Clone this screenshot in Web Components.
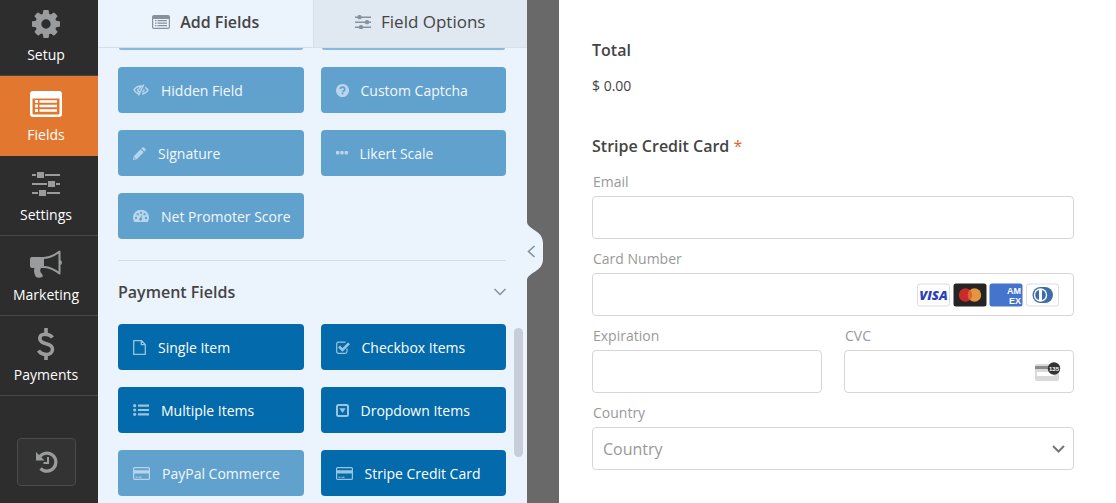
<!DOCTYPE html>
<html lang="en">

<head>
    <meta charset="utf-8">
    <meta name="viewport" content="width=device-width">
    <title>Form Builder</title>
    <style>
        body {
            margin: 0;
            color: #444;
            font-family: "Open Sans", "Noto Sans", sans-serif;
            font-size: 14px;
            background: #fff;
        }
    </style>
</head>

<body>
    <!-- Templates -->
    <template id="tmp-app">
        <style>
            :host {
                display: flex;
                height: 100vh;
                overflow: hidden;
            }
        </style>
        <slot></slot>
    </template>

    <template id="tmp-sidebar">
        <style>
            :host {
                display: flex;
                flex-direction: column;
                flex: none;
                width: 98px;
                background: #2d2d2d;
            }

            nav {
                margin-top: -4px;
            }

            .history {
                display: flex;
                align-items: center;
                justify-content: center;
                height: 48px;
                margin: 42px 22px 0 17px;
                padding: 0;
                color: #9a9b9c;
                background: #333;
                border: 1px solid #4b4b4b;
                border-radius: 4px;
            }
        </style>
        <nav><slot></slot></nav>
        <button class="history" aria-label="Revisions"><fb-icon name="history"></fb-icon></button>
    </template>

    <template id="tmp-nav">
        <style>
            :host {
                display: block;
            }

            a {
                display: flex;
                flex-direction: column;
                align-items: center;
                box-sizing: border-box;
                height: 80px;
                padding: 12px 6px 0 0;
                color: #fff;
                border-bottom: 1px solid #474747;
                text-decoration: none;
                line-height: 24px;
            }

            fb-icon {
                height: 31px;
                margin-bottom: 4px;
                color: #9a9b9c;
            }

            :host([active]) a {
                background: #e27730;
                border-color: #e27730;
            }

            :host([active]) fb-icon {
                color: #fff;
            }
        </style>
        <a href="#"><fb-icon></fb-icon><slot></slot></a>
    </template>

    <template id="tmp-panel">
        <style>
            :host {
                display: flex;
                flex-direction: column;
                flex: none;
                position: relative;
                width: 429px;
                background: #ebf3fc;
            }

            .tabs {
                display: flex;
                flex: none;
            }

            .body {
                flex: 1;
                min-height: 0;
                overflow: hidden;
                padding: 0 21px 0 20px;
            }

            .thumb {
                position: absolute;
                right: 4px;
                top: 328px;
                width: 9px;
                height: 129px;
                border-radius: 5px;
                background: #c8ced9;
            }

            .toggle {
                position: absolute;
                left: 100%;
                top: 222px;
                width: 16px;
                height: 58px;
                padding: 0;
                border: 0;
                background: none;
            }

            .toggle svg {
                display: block;
            }
        </style>
        <div class="tabs"><slot name="tab"></slot></div>
        <div class="body"><slot></slot></div>
        <div class="thumb"></div>
        <button class="toggle" aria-label="Collapse">
            <svg width="16" height="58" viewBox="0 0 16 58">
                <path fill="#ebf3fc" d="M0 0C1 8 16 8 16 21V37C16 50 1 50 0 58Z" />
                <path fill="none" stroke="#86919e" stroke-width="1.6" d="M7.500 24L1.500 29.500L7.500 35" />
            </svg>
        </button>
    </template>

    <template id="tmp-tab">
        <style>
            :host {
                flex: 1;
            }

            button {
                display: flex;
                align-items: center;
                justify-content: center;
                gap: 10px;
                box-sizing: border-box;
                width: 100%;
                height: 48px;
                padding: 0 0 4px;
                color: #444;
                background: #e0e8f1;
                border: solid #d6dfea;
                border-width: 0 0 1px 1px;
                font: inherit;
                font-size: 17px;
            }

            fb-icon {
                color: #86919e;
            }

            :host([active]) button {
                background: #ebf3fc;
                border-left-color: transparent;
                font-size: 16px;
                font-weight: 600;
            }
        </style>
        <button><fb-icon></fb-icon><slot></slot></button>
    </template>

    <template id="tmp-group">
        <style>
            :host {
                display: block;
            }

            :host([label]) {
                margin-top: 21px;
                border-top: 1px solid #d2dbe6;
            }

            header {
                display: none;
                align-items: center;
                justify-content: space-between;
                box-sizing: border-box;
                height: 63px;
                padding-bottom: 2px;
                color: #86919e;
            }

            :host([label]) header {
                display: flex;
            }

            h2 {
                margin: 0;
                color: #444;
                font-size: 16px;
                font-weight: 600;
            }

            .grid {
                display: grid;
                grid-template-columns: 1fr 1fr;
                gap: 17px;
            }

            .peek {
                height: 2px;
                margin: 0 1px;
                background: #87b9de;
                border-radius: 0 0 2px 2px;
            }

            :host([label]) .peek {
                display: none;
            }
        </style>
        <header><h2 id="label"></h2><fb-icon name="down"></fb-icon></header>
        <div class="grid">
            <div class="peek"></div>
            <div class="peek"></div>
            <slot></slot>
        </div>
    </template>

    <template id="tmp-button">
        <style>
            :host {
                display: block;
            }

            button {
                display: flex;
                align-items: center;
                gap: 12px;
                width: 100%;
                height: 46px;
                padding: 0 0 0 15px;
                color: #fff;
                background: #036aab;
                border: 0;
                border-radius: 4px;
                font: inherit;
                white-space: nowrap;
            }

            fb-icon {
                opacity: .6;
            }

            :host([off]) button {
                color: #f3f8fd;
                background: #61a1ce;
            }
        </style>
        <button><fb-icon></fb-icon><slot></slot></button>
    </template>

    <template id="tmp-preview">
        <style>
            :host {
                flex: 1;
                min-width: 0;
                padding: 38px 42px 0 33px;
                background: #fff;
                border-left: 32px solid #696969;
            }

            h3 {
                margin: 0;
                font-size: 16px;
                font-weight: 600;
                line-height: 24px;
            }

            p {
                margin: 12px 0 36px;
                font-size: 14px;
                line-height: 24px;
            }

            span {
                color: #e0652c;
                font-weight: 400;
            }

            .fields {
                display: grid;
                grid-template-columns: repeat(2, minmax(0, 1fr));
                gap: 12px 22px;
                margin-top: 16px;
            }
        </style>
        <h3>Total</h3>
        <p>$ 0.00</p>
        <h3>Stripe Credit Card <span>*</span></h3>
        <div class="fields"><slot></slot></div>
    </template>

    <template id="tmp-field">
        <style>
            :host {
                display: block;
            }

            :host([wide]) {
                grid-column: 1 / -1;
            }

            label {
                display: block;
                height: 22px;
                padding-left: 1px;
                color: #999;
                font-size: 14px;
                line-height: 16px;
            }

            .box {
                display: flex;
                align-items: center;
                box-sizing: border-box;
                height: 43px;
                color: #777;
                border: 1px solid #d6d6d6;
                border-radius: 4px;
            }

            input,
            select {
                flex: 1;
                min-width: 0;
                height: 100%;
                padding: 0 10px;
                color: #999;
                background: none;
                border: 0;
                outline: none;
                font: inherit;
                font-size: 16px;
                appearance: none;
            }

            .box:focus-within {
                border-color: #999;
            }
        </style>
        <label for="control" id="label"></label>
        <div class="box"><slot></slot></div>
    </template>

    <!-- Page -->
    <fb-app>
        <fb-sidebar>
            <fb-nav icon="gear">Setup</fb-nav>
            <fb-nav icon="form" active>Fields</fb-nav>
            <fb-nav icon="sliders">Settings</fb-nav>
            <fb-nav icon="bullhorn">Marketing</fb-nav>
            <fb-nav icon="dollar">Payments</fb-nav>
        </fb-sidebar>
        <fb-panel>
            <fb-tab slot="tab" icon="formsmall" active>Add Fields</fb-tab>
            <fb-tab slot="tab" icon="slidersmall">Field Options</fb-tab>
            <fb-group>
                <fb-button icon="hidden" off>Hidden Field</fb-button>
                <fb-button icon="question" off>Custom Captcha</fb-button>
                <fb-button icon="pencil" off>Signature</fb-button>
                <fb-button icon="dots" off>Likert Scale</fb-button>
                <fb-button icon="gauge" off>Net Promoter Score</fb-button>
            </fb-group>
            <fb-group label="Payment Fields">
                <fb-button icon="file">Single Item</fb-button>
                <fb-button icon="check">Checkbox Items</fb-button>
                <fb-button icon="list">Multiple Items</fb-button>
                <fb-button icon="dropdown">Dropdown Items</fb-button>
                <fb-button icon="card" off>PayPal Commerce</fb-button>
                <fb-button icon="card">Stripe Credit Card</fb-button>
            </fb-group>
        </fb-panel>
        <fb-preview>
            <fb-field wide label="Email" type="email"></fb-field>
            <fb-field wide label="Card Number"><fb-icon name="brands"></fb-icon></fb-field>
            <fb-field label="Expiration"></fb-field>
            <fb-field label="CVC"><fb-icon name="cvc"></fb-icon></fb-field>
            <fb-field wide label="Country" type="select"><fb-icon name="select"></fb-icon></fb-field>
        </fb-preview>
    </fb-app>

    <script>
        // name: [width, height, markup]
        const icons = {
            gear: [28, 28, '<svg viewBox="0 128 1536 1536" width="28" height="28"><path d="M1024 896q0-106-75-181t-181-75-181 75-75 181 75 181 181 75 181-75 75-181zm512-109v222q0 12-8 23t-20 13l-185 28q-19 54-39 91 35 50 107 138 10 12 10 25t-9 23q-27 37-99 108t-94 71q-12 0-26-9l-138-108q-44 23-91 38-16 136-29 186-7 28-36 28h-222q-14 0-24.500-8.500t-11.500-21.500l-28-184q-49-16-90-37l-141 107q-10 9-25 9-14 0-25-11-126-114-165-168-7-10-7-23 0-12 8-23 15-21 51-66.500t54-70.500q-27-50-41-99l-183-27q-13-2-21-12.500t-8-23.500v-222q0-12 8-23t19-13l186-28q14-46 39-92-40-57-107-138-10-12-10-24 0-10 9-23 26-36 98.500-107.500t94.500-71.500q13 0 26 10l138 107q44-23 91-38 16-136 29-186 7-28 36-28h222q14 0 24.500 8.500t11.500 21.500l28 184q49 16 90 37l142-107q9-9 24-9 13 0 25 10 129 119 165 170 7 8 7 22 0 12-8 23-15 21-51 66.500t-54 70.500q26 50 41 98l183 28q13 2 21 12.500t8 23.500z"/></svg>'],
            form: [32, 26, '<path fill-rule="evenodd" d="M3 0H29a3 3 0 0 1 3 3V23a3 3 0 0 1-3 3H3a3 3 0 0 1-3-3V3a3 3 0 0 1 3-3ZM2.500 7.500V22.500a1 1 0 0 0 1 1H28.500a1 1 0 0 0 1-1V7.500Z"/><path d="M5 9h3v3H5zM9.500 9.200H27v2.500H9.500zM5 13.500h3v3H5zM9.500 13.800H27v2.500H9.500zM5 18h3v3H5zM9.500 18.300H27v2.500H9.500z"/>'],
            formsmall: [18, 14, '<path fill-rule="evenodd" d="M2 0H16a2 2 0 0 1 2 2V12a2 2 0 0 1-2 2H2a2 2 0 0 1-2-2V2a2 2 0 0 1 2-2ZM1.200 4V12a.8.8 0 0 0 .8.8H16a.8.8 0 0 0 .8-.8V4Z"/><path d="M3 5h1.500v1.300H3zM5.500 5H15v1.300H5.500zM3 7.500h1.500v1.300H3zM5.500 7.500H15v1.300H5.500zM3 10h1.500v1.300H3zM5.500 10H15v1.300H5.500z"/>'],
            sliders: [28, 26, '<path d="M0 3h28v2H0zM0 12h28v2H0zM0 21h28v2H0z"/><path stroke="#2d2d2d" d="M4.500.5h8v7h-8zM15.500 9.500h8v7h-8zM6.500 18.500h8v7h-8z"/>'],
            slidersmall: [16, 14, '<path d="M0 1.500h16V3H0zM0 6.500h16V8H0zM0 11.500h16V13H0z"/><rect x="2.500" y="0" width="4" height="4.200" rx="1.500"/><rect x="10" y="5" width="4" height="4.200" rx="1.500"/><rect x="4" y="10" width="4" height="4.200" rx="1.500"/>'],
            bullhorn: [32, 28, '<path d="M2 7H14V18H11Q9 21 12 24Q13 25 12.500 27Q8 28.500 6 27Q3 22 4.500 18H2Q0 18 0 16V9Q0 7 2 7Z"/><path fill="none" stroke="currentColor" stroke-width="2" stroke-linejoin="round" d="M14 8Q22 7.500 29.500 1.500V23.500Q22 17.500 14 17"/><path d="M30 10Q32 10.500 32 12.500T30 15Z"/>'],
            dollar: [18, 32, '<g fill="none" stroke="currentColor" stroke-width="3.600"><path d="M9 0V5M9 27V32"/><path d="M15.500 9.500C12.500 5.500 2.800 4.500 2.800 10.500C2.800 17.500 15.500 14 15.500 21C15.500 28.500 4.500 27.500 1.500 22.500"/></g>'],
            history: [24, 24, '<path fill="none" stroke="currentColor" stroke-width="3.200" d="M4.500 7A9 9 0 1 1 5.500 18.500"/><path d="M1 2V10.500H9.500Z"/><path fill="none" stroke="currentColor" stroke-width="2" d="M13 7V13H8.500"/>'],
            down: [12, 8, '<path fill="none" stroke="currentColor" stroke-width="1.500" d="M.5 1L6 6.500L11.500 1"/>'],
            select: [24, 8, '<path fill="none" stroke="currentColor" stroke-width="2" d="M4 1L9.500 6.500L15 1"/>'],
            hidden: [16, 12, '<g fill="none" stroke="currentColor" stroke-width="1.500"><path d="M6.500 10Q3 9.500 1 6Q3.500 2 8 2L9.500 2.200M12 3.300Q14 4.500 15 6Q13 9.500 9 10"/><path d="M10.800.5L5.500 11.500M4.500 5Q5 7.500 6.500 8M8 3.500Q6 3.500 6 5.500M11 5.500Q11 7.500 9.500 8"/></g>'],
            question: [13, 13, '<path d="M6.500 0a6.500 6.500 0 1 0 .01 0Z"/><g fill="none" stroke="#61a1ce" stroke-width="1.700"><path d="M4.300 5Q4.500 3.200 6.500 3.200T8.700 5T6.500 7.600"/><path d="M6.500 8.700V10.300"/></g>'],
            pencil: [13, 13, '<path fill-rule="evenodd" d="M0 13L.8 9.200L7.700 2.300L10.700 5.300L3.800 12.200ZM8.400 1.600L9.500.5Q10.200-.2 11 .5L12.500 2Q13.200 2.800 12.500 3.500L11.400 4.600ZM1.400 10.300L1.200 11.800L2.700 11.500Z"/>'],
            dots: [12, 4, '<rect width="3.400" height="3.400" rx=".8"/><rect x="4.300" width="3.400" height="3.400" rx=".8"/><rect x="8.600" width="3.400" height="3.400" rx=".8"/>'],
            gauge: [16, 12, '<path fill-rule="evenodd" d="M1.300 12A8 8 0 1 1 14.700 12ZM2 7v2h2V7ZM3.700 3.300v2h2v-2ZM7.200 1.800v2h1.800v-2ZM10.500 3.300v2h2v-2ZM12 7v2h2V7ZM8.700 4.500L7.300 7.800Q6 8.500 6.300 9.800Q7 11.200 8.500 10.500Q9.700 9.500 8.600 8Z"/>'],
            file: [13, 15, '<path fill="none" stroke="currentColor" stroke-width="1.300" d="M.7.7H8.500L12.300 4.500V14.300H.7ZM8.300.7V4.700H12.300"/>'],
            check: [14, 13, '<path fill="none" stroke="currentColor" stroke-width="1.200" d="M11 7.500V10.500Q11 12.300 9.200 12.300H2.500Q.7 12.300 .7 10.500V3Q.7 1.200 2.500 1.200H9.500"/><path fill="none" stroke="currentColor" stroke-width="2.600" d="M3 5.500L6.500 9L13 2.300"/>'],
            list: [16, 12, '<path d="M5 .6h11v2.200H5zM5 4.900h11v2.200H5zM5 9.200h11v2.200H5z"/><circle cx="1.700" cy="1.700" r="1.600"/><circle cx="1.700" cy="6" r="1.600"/><circle cx="1.700" cy="10.300" r="1.600"/>'],
            dropdown: [13, 13, '<rect x="1" y="1" width="11" height="11" rx="1.500" fill="none" stroke="currentColor" stroke-width="2"/><path d="M3.300 4.300h6.400L6.500 9Z"/>'],
            card: [17, 13, '<rect x=".6" y=".6" width="15.800" height="11.800" rx="1" fill="none" stroke="currentColor" stroke-width="1.200"/><path d="M0 3.200h17v3.300H0zM2.500 9.800h2v1h-2zM5.500 9.800h3v1h-3z"/>'],
            brands: [156, 24, '<g transform="translate(0 .5)"><rect x=".5" y=".5" width="32" height="22" rx="2.500" fill="#fff" stroke="#ddd"/><text x="16.500" y="16" text-anchor="middle" fill="#2b3fc0" font-family="Open Sans" font-size="13" font-weight="800" font-style="italic">VISA</text><rect x="36.500" width="33" height="23" rx="2.500" fill="#252525"/><circle cx="48.500" cy="11.500" r="6.700" fill="#c92b28"/><circle cx="57.500" cy="11.500" r="6.700" fill="#e5953f"/><path d="M53 6.500a6.700 6.700 0 0 1 0 10a6.700 6.700 0 0 1 0-10Z" fill="#e0632d"/><rect x="72.500" width="33" height="23" rx="2.500" fill="#4474cc"/><g fill="#fff" font-family="Liberation Sans" font-size="9" font-weight="700"><text x="90" y="10">AM</text><text x="92" y="20">EX</text></g><rect x="109.500" y=".5" width="32" height="22" rx="2.500" fill="#fff" stroke="#ddd"/><path d="M124 3.500H128A8 8 0 0 1 128 19.500H124Z" fill="#3e6cab"/><circle cx="123.500" cy="11.500" r="8" fill="#3e6cab"/><circle cx="123.500" cy="11.500" r="6.700" fill="#fff"/><path d="M122 6.500A5.200 5.200 0 0 0 122 16.500ZM125 6.500A5.200 5.200 0 0 1 125 16.500Z" fill="#3e6cab"/></g>'],
            cvc: [38, 20, '<rect y="2" width="24" height="17" rx="2" fill="#d9d9d9"/><path fill="#8b8b8b" d="M0 4h17v3H0z"/><rect x="2" y="10" width="17" height="4" fill="#fff"/><circle cx="19" cy="6.500" r="6.200" fill="#333"/><text x="19" y="9" text-anchor="middle" fill="#fff" font-family="Liberation Sans" font-size="6" font-weight="700">135</text>']
        }

        // Clones the template into an open shadow root
        class BaseElement extends HTMLElement {
            connectedCallback() {
                if (this.shadowRoot) return
                const shadow = this.attachShadow({ mode: 'open' })
                const tmp = document.getElementById(this.localName.replace('fb-', 'tmp-'))
                shadow.appendChild(tmp.content.cloneNode(true))
                this.render(shadow)
            }

            render(shadow) {
                const name = this.getAttribute('icon')
                if (name) {
                    shadow.querySelector('fb-icon').setAttribute('name', name)
                }
            }
        }

        class FormGroup extends BaseElement {
            render(shadow) {
                shadow.getElementById('label').textContent = this.getAttribute('label')
            }
        }

        class FormField extends BaseElement {
            render(shadow) {
                const label = this.getAttribute('label')
                const type = this.getAttribute('type')
                shadow.getElementById('label').textContent = label
                const el = document.createElement(type === 'select' ? 'select' : 'input')
                el.id = 'control'
                if (type === 'select') {
                    el.add(new Option(label))
                } else {
                    el.type = type || 'text'
                }
                shadow.querySelector('.box').prepend(el)
            }
        }

        class FormIcon extends HTMLElement {
            static observedAttributes = ['name']

            attributeChangedCallback() {
                const [w, h, markup] = icons[this.getAttribute('name')]
                const shadow = this.shadowRoot || this.attachShadow({ mode: 'open' })
                shadow.innerHTML = `
                    <style>
                        :host { display: flex; align-items: center; flex: none; pointer-events: none; }
                        svg { display: block; fill: currentColor; }
                    </style>
                    <svg width="${w}" height="${h}" viewBox="0 0 ${w} ${h}" aria-hidden="true">${markup}</svg>`
            }
        }

        customElements.define('fb-icon', FormIcon)
        customElements.define('fb-group', FormGroup)
        customElements.define('fb-field', FormField)
        for (const name of ['app', 'sidebar', 'nav', 'panel', 'tab', 'button', 'preview']) {
            customElements.define('fb-' + name, class extends BaseElement { })
        }
    </script>
</body>

</html>
